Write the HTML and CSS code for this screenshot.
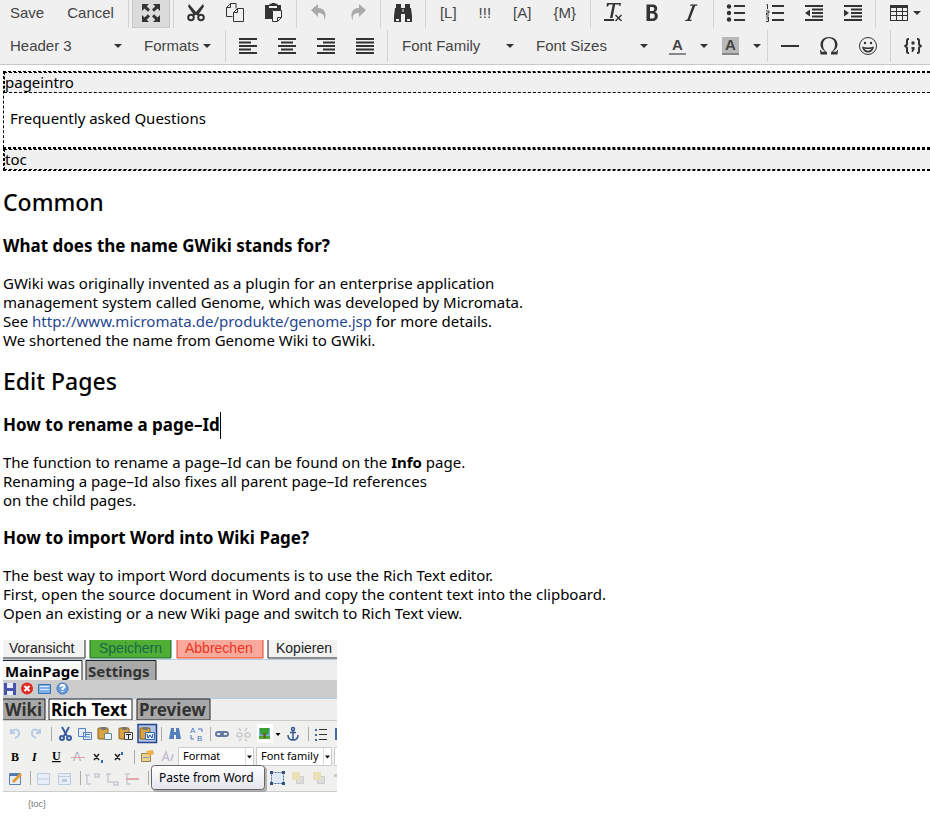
FILE: index.html
```html
<!DOCTYPE html>
<html lang="en">
<head>
<meta charset="utf-8">
<title>GWiki editor</title>
<link rel="stylesheet" href="styles.css">
</head>
<body>
<div class="toolbar" role="toolbar" aria-label="Editor">
  <div class="row row-top">
    <div class="group">
      <button class="btn text">Save</button>
      <button class="btn text">Cancel</button>
    </div>
    <div class="group">
      <button class="btn icon active" aria-label="Fullscreen"><svg viewBox="0 0 20 20"><path d="M1 1h7L5.700 3.300 9 6.500 7 8.800 3.500 5.500 1 8zM19 1v7l-2.500-2.500L13 8.800 11 6.500l3.300-3.200L12 1zM1 19v-7l2.500 2.500L7 11.200l2 2.300-3.300 3.200L8 19zM19 19h-7l2.300-2.300L11 13.500l2-2.300 3.500 3.300L19 12z"/></svg></button>
    </div>
    <div class="group">
      <button class="btn icon" aria-label="Cut"><svg viewBox="0 0 20 20"><path d="M3 1l7 8 7-8 1 2.500-5.500 8h-5L2 3.500z"/><g class="line"><circle cx="5" cy="14.500" r="2.800"/><circle cx="15" cy="14.500" r="2.800"/><path d="M7 12.500l3-2 3 2"/></g></svg></button>
      <button class="btn icon" aria-label="Copy"><svg viewBox="0 0 20 20"><g class="thin"><path d="M7.500 13.500h-6v-9l4-4h5.500v5M5.500.5v4h-4M8.500 18.500V9.500l4-4h6v13zM12.500 5.500v4h-4"/></g></svg></button>
      <button class="btn icon" aria-label="Paste"><svg viewBox="0 0 20 20"><path d="M1 2h4.500V.8h2L8 0h3l.5.8h2V2H17v5H8v9H1zM5 3v2h8V3z" fill-rule="evenodd"/><path class="thin" d="M8.500 7.500h9v7l-4 4h-5zM17.500 14.500h-4v4"/></svg></button>
    </div>
    <div class="group">
      <button class="btn icon" disabled aria-label="Undo"><svg viewBox="0 0 20 20"><path d="M2 7l7-6v4c7 0 9.500 6 6 13 1-6-1-8-6-8v4z"/></svg></button>
      <button class="btn icon" disabled aria-label="Redo"><svg viewBox="0 0 20 20"><path d="M18 7l-7-6v4C4 5 1.500 11 5 18c-1-6 1-8 6-8v4z"/></svg></button>
    </div>
    <div class="group">
      <button class="btn icon" aria-label="Find and replace"><svg viewBox="0 0 20 20"><path d="M3 1h5v4h4V1h5v4h1l1 8v6h-7v-8H8v8H1v-6l1-8h1zM3 16v2h3v-2zM14 16v2h3v-2zM9.500 6v3h1V6z" fill-rule="evenodd"/></svg></button>
    </div>
    <div class="group flush">
      <button class="btn text">[L]</button>
      <button class="btn text">!!!</button>
      <button class="btn text">[A]</button>
      <button class="btn text">{M}</button>
    </div>
    <div class="group">
      <button class="btn icon" aria-label="Clear formatting"><svg viewBox="0 0 20 20"><path d="M4 0h14l-.6 3h-1l-.2-1.500h-4L9.500 15H7L9.700 1.500H6L5 3.500H3.500zM1 16h10v2H1zM12 12.500l1-1 2.500 2.500 2.500-2.500 1 1-2.500 2.500 2.500 2.500-1 1-2.500-2.500-2.500 2.500-1-1 2.500-2.500z"/></svg></button>
      <button class="btn icon" aria-label="Bold"><svg viewBox="0 0 20 20"><path d="M4.500 1.500H11c5 0 5.500 6 2 7.500C17.500 10.500 16.500 18 11 18H4.500zM8 4v4h2.500c2.500 0 2.500-4 0-4zM8 10.500v5h2.500c3 0 3-5 0-5z" fill-rule="evenodd"/></svg></button>
      <button class="btn icon" aria-label="Italic"><svg viewBox="0 0 20 20"><path d="M9.500 1.500H16.500L16 2.800H14.200L8.800 16.700H10.800L10.300 18H4L4.500 16.700H6.300L11.500 2.800H9z"/></svg></button>
    </div>
    <div class="group">
      <button class="btn icon" aria-label="Bullet list"><svg viewBox="0 0 20 20"><circle cx="3" cy="3.500" r="2.200"/><circle cx="3" cy="10" r="2.200"/><circle cx="3" cy="16.500" r="2.200"/><path d="M8 2h11v2H8zM8 9h11v2H8zM8 16h11v2H8z"/></svg></button>
      <button class="btn icon" aria-label="Numbered list"><svg viewBox="0 0 20 20"><path d="M7 2h12v2H7zM7 9h12v2H7zM7 16h12v2H7z"/><path class="thin" d="M1.500 1.500h1V6M1 8h3v2H1.500v2H4M1 14h2.500v4.500H1M1.500 16h2"/></svg></button>
      <button class="btn icon" aria-label="Decrease indent"><svg viewBox="0 0 20 20"><path d="M1 2h18v2H1zM8 5.500h11v2H8zM8 9h11v2H8zM8 12.500h11v2H8zM1 16h18v2H1zM1 10l5-3.500v7z"/></svg></button>
      <button class="btn icon" aria-label="Increase indent"><svg viewBox="0 0 20 20"><path d="M1 2h18v2H1zM8 5.500h11v2H8zM8 9h11v2H8zM8 12.500h11v2H8zM1 16h18v2H1zM6 10L1 6.500v7z"/></svg></button>
    </div>
    <div class="group">
      <button class="btn menu" aria-label="Table"><svg class="glyph" viewBox="0 0 20 20"><path fill-rule="evenodd" d="M1 2h18v16H1zM2 5v3H7V5zM8 5v3h5V5zM14 5v3h4V5zM2 9v3H7V9zM8 9v3h5V9zM14 9v3h4V9zM2 13v4H7v-4zM8 13v4h5v-4zM14 13v4h4v-4z"/></svg><span class="caret"></span></button>
    </div>
  </div>
  <div class="row">
    <div class="group">
      <span class="pick"><select aria-label="Block format"><option>Header 3</option></select><span class="caret"></span></span>
      <button class="btn text menu">Formats<span class="caret"></span></button>
    </div>
    <div class="group">
      <button class="btn icon" aria-label="Align left"><svg viewBox="0 0 20 20"><path d="M1 2h18v2H1zM1 5.500h12v2H1zM1 9h18v2H1zM1 12.500h12v2H1zM1 16h18v2H1z"/></svg></button>
      <button class="btn icon" aria-label="Align center"><svg viewBox="0 0 20 20"><path d="M1 2h18v2H1zM4 5.500h12v2H4zM1 9h18v2H1zM4 12.500h12v2H4zM1 16h18v2H1z"/></svg></button>
      <button class="btn icon" aria-label="Align right"><svg viewBox="0 0 20 20"><path d="M1 2h18v2H1zM7 5.500h12v2H7zM1 9h18v2H1zM7 12.500h12v2H7zM1 16h18v2H1z"/></svg></button>
      <button class="btn icon" aria-label="Justify"><svg viewBox="0 0 20 20"><path d="M1 2h18v2H1zM1 5.500h18v2H1zM1 9h18v2H1zM1 12.500h18v2H1zM1 16h18v2H1z"/></svg></button>
    </div>
    <div class="group">
      <span class="pick"><select aria-label="Font family"><option>Font Family</option></select><span class="caret"></span></span>
      <span class="pick"><select aria-label="Font size"><option>Font Sizes</option></select><span class="caret"></span></span>
      <span class="split">
        <button class="btn color" aria-label="Text color"><span class="swatch">A</span></button>
        <button class="btn open" aria-label="Choose text color"><span class="caret"></span></button>
      </span>
      <span class="split">
        <button class="btn color" aria-label="Background color"><span class="swatch filled">A</span></button>
        <button class="btn open" aria-label="Choose background color"><span class="caret"></span></button>
      </span>
    </div>
    <div class="group">
      <button class="btn icon" aria-label="Horizontal line"><svg viewBox="0 0 20 20"><path d="M1 9h18v2H1z"/></svg></button>
      <button class="btn icon" aria-label="Special character"><svg viewBox="0 0 20 20"><path d="M1 14h1l.7 1.700h3.500C3 13.500 1.500 11.500 1.500 8.500 1.500 4 5 1 10 1s8.500 3 8.500 7.500c0 3-1.500 5-4.700 7.200h3.500L18 14h1l-.5 4.500H12v-2.300c2.800-2 4-4.200 4-7.500C16 4.500 13.500 2.200 10 2.200S4 4.500 4 8.700c0 3.300 1.200 5.500 4 7.500v2.300H1.500z"/></svg></button>
      <button class="btn icon" aria-label="Emoticons"><svg viewBox="0 0 20 20"><circle class="ring" cx="10" cy="10" r="8.500"/><circle cx="7" cy="7" r="1.200"/><circle cx="13" cy="7" r="1.200"/><path d="M4 10.500q6 2 12 0-1 6-6 6t-6-6zM6 12.500q4 4.500 8 0-4 1-8 0z" fill-rule="evenodd"/></svg></button>
    </div>
    <div class="group">
      <button class="btn icon" aria-label="Code sample"><svg viewBox="0 0 20 20"><path class="line" d="M6 3H5.500Q4 3 4 4.500V8Q4 9.500 1.500 10 4 10.500 4 12v3.500Q4 17 5.500 17H6M14 3h.5Q16 3 16 4.500V8q0 1.500 2.500 2-2.500.5-2.500 2v3.500q0 1.500-1.500 1.500H14"/><circle cx="10" cy="7" r="1.700"/><path d="M8.500 11h3v2.500L9.800 16H8.500l.8-2.500h-.8z"/></svg></button>
    </div>
  </div>
</div>

<main class="page">
  <section class="macro">
    <div class="macro-head">pageintro</div>
    <div class="macro-body"><p>Frequently asked Questions</p></div>
  </section>
  <section class="macro">
    <div class="macro-head">toc</div>
  </section>

  <h2>Common</h2>
  <h3>What does the name GWiki stands for?</h3>
  <p>GWiki was originally invented as a plugin for an enterprise application<br>
  management system called Genome, which was developed by Micromata.<br>
  See <a href="http://www.micromata.de/produkte/genome.jsp">http://www.micromata.de/produkte/genome.jsp</a> for more details.<br>
  We shortened the name from Genome Wiki to GWiki.</p>

  <h2>Edit Pages</h2>
  <h3>How to rename a page–Id<span class="cursor"></span></h3>
  <p>The function to rename a page–Id can be found on the <b>Info</b> page.<br>
  Renaming a page–Id also fixes all parent page–Id references<br>
  on the child pages.</p>

  <h3>How to import Word into Wiki Page?</h3>
  <p>The best way to import Word documents is to use the Rich Text editor.<br>
  First, open the source document in Word and copy the content text into the clipboard.<br>
  Open an existing or a new Wiki page and switch to Rich Text view.</p>

  <svg class="figure" viewBox="0 0 334 172" role="img" aria-label="Paste from Word in the Rich Text editor">
    <defs>
      <linearGradient id="tip" x2="0" y2="1"><stop stop-color="#fff"/><stop offset="1" stop-color="#e4e5f0"/></linearGradient>
      <g id="clip"><rect x="-6" y="-6" width="10" height="11" rx="1" fill="#d9a441" stroke="#876018"/><rect x="-3" y="-7" width="5" height="3" fill="#777"/></g>
    </defs>
    <rect width="334" height="152" fill="#eee"/>
    <path fill="#fff" d="M0 0h334v19H0z"/>
    <path fill="#f3f3f3" stroke="#222" d="M-1-1h83v19H-1zM265-1h80v19h-80z"/>
    <path fill="#4fae33" stroke="#176b35" d="M87-1h81v19H87z"/>
    <path fill="#f7a99b" stroke="#e8422c" d="M174-1h86v19h-86z"/>
    <g class="fig-ui">
      <text x="6" y="13" fill="#222">Voransicht</text><text x="96" y="13" fill="#16694a">Speichern</text>
      <text x="182" y="13" fill="#ec3322">Abbrechen</text><text x="273" y="13" fill="#222">Kopieren</text>
    </g>
    <path stroke="#b3cce0" d="M0 19.500h334"/>
    <path fill="#fafafa" stroke="#222" d="M-1 20.500h80V41H-1z"/><path fill="#a8a8a8" stroke="#222" d="M83 20.500h70V41H83z"/>
    <path fill="#ccc" d="M0 40h334v18H0z"/><path stroke="#b3cce0" d="M0 58.500h334"/>
    <g class="fig-tab"><text x="2" y="37">MainPage</text><text x="85" y="37" fill="#333">Settings</text></g>
    <path fill="#f0f0ee" d="M0 80h334v72H0z"/>
    <path fill="#a8a8a8" stroke="#222" d="M-1 59h43v21H-1zM134 59h73v21h-73z"/><path fill="#fff" stroke="#222" d="M46 59h83v21H46z"/>
    <g class="fig-tab large"><text x="2" y="76" fill="#333">Wiki</text><text x="48" y="76">Rich Text</text><text x="136" y="76" fill="#333">Preview</text></g>
    <path stroke="#ccc" d="M0 80.500h334M0 151.500h334"/>

    <path fill="#4854a9" d="M1 43h12v12H1z"/><path fill="#e8edff" d="M4 43h6v5H4zM4 51h6v4H4z"/>
    <circle cx="24" cy="48.500" r="6" fill="#dd2c26"/><path stroke="#fff" stroke-width="2" d="M21.500 46l5 5m0-5l-5 5"/>
    <path fill="#7eaeea" stroke="#3b72b8" d="M35.500 44.500h12v9h-12z"/><path stroke="#e1efff" d="M37 46.500h9M37 49.500h9"/>
    <circle cx="59.500" cy="48.500" r="5.500" fill="#6a9de0" stroke="#3b72b8"/><path fill="none" stroke="#fff" stroke-width="2" d="M57.500 47q0-2 2-2t2 2l-2 2v1m0 1v1"/>

    <path stroke="#aaa" d="M48.500 87v14M158.500 87v14M207.500 87v14M305.500 87v14M131.500 110v14M27.500 131v14M77.500 131v14M145.500 131v14"/>
    <g fill="none" stroke="#b8cbe6" stroke-width="2"><path d="M8 89v4h4M8 92q6-5 8 0 1 4-4 6M37 89v4h-4M37 92q-6-5-8 0-1 4 4 6"/></g>
    <g fill="none" stroke="#385ea0" stroke-width="2"><path d="M59 87l5 9M66 87l-5 9"/><circle cx="59" cy="98" r="2"/><circle cx="66" cy="98" r="2"/></g>
    <path fill="#e5efff" stroke="#5582c4" d="M75.500 88.500h7v8h-7zM80.500 92.500h8v7h-8z"/><path stroke="#5582c4" d="M82 94.500h5M82 97h5"/>
    <use href="#clip" x="101" y="94"/><path fill="#e9f1ff" stroke="#668888" d="M101.500 93.500h7v6h-7z"/>
    <use href="#clip" x="122" y="94"/><path fill="#eee" stroke="#444" d="M121.500 92.500h8v7h-8z"/><path stroke="#222" d="M123 94.500h5M125.500 94v5"/>
    <path fill="#b2c3e6" stroke="#24468c" stroke-width="1.500" d="M135 84.500h18.500v18H135z"/>
    <use href="#clip" x="143" y="94"/><path fill="#e4efff" stroke="#356ab5" d="M142.500 92.500h9v7h-9z"/><path fill="none" stroke="#2551a2" d="M144 94l1 4 2-3 2 3 1-4"/>
    <path fill="#557ebd" d="M168 88h3v4h2v-4h3l2 11h-5v-4h-2v4h-5z"/>
    <g class="fig-small" fill="#4776c7"><text x="187" y="93">A</text><text x="194" y="101">B</text><path fill="none" stroke="#4776c7" d="M195 89h4v3M188 95v4h3"/></g>
    <g fill="none" stroke="#6579a0" stroke-width="2"><rect x="213" y="92" width="7" height="4" rx="2"/><rect x="218" y="92" width="7" height="4" rx="2"/></g>
    <g fill="none" stroke="#c9c9ce" stroke-width="1.500"><rect x="234" y="93" width="5" height="4" rx="2"/><rect x="242" y="93" width="5" height="4" rx="2"/><path d="M236 88l2 3M244 88l-2 3M236 101l2-2M244 101l-2-2"/></g>
    <path fill="#fff" d="M254 84h16v19h-16z"/><path fill="#77aee5" d="M256 88h11v11h-11z"/><path fill="#3aa02c" d="M257 88h9v5l-2 2h-5l-2-2z"/><path fill="#4da832" d="M256 96h11v3h-11z"/><path stroke="#70501e" stroke-width="2" d="M261.500 93v5"/>
    <path d="M272.500 93h5l-2.500 3z"/><g fill="none" stroke="#335a93" stroke-width="1.500"><circle cx="290" cy="89" r="1.500"/><path d="M290 91v9M287 92.500h6M285 95q0 5 5 5t5-5"/></g>
    <path stroke="#333" d="M316 89.500h8M316 94.500h8M316 99.500h8"/><path fill="#4068aa" d="M312 89h2v2h-2zM312 94h2v2h-2zM312 99h2v2h-2zM332 88h2v12h-2z"/>

    <g class="fig-serif"><text x="8" y="121">B</text><text x="29" y="121" font-style="italic">I</text><text x="49" y="120" text-decoration="underline">U</text></g>
    <text class="fig-small big" x="70" y="121" fill="#aaaabb">A</text><path stroke="#e1a3a3" d="M68 117.500h14"/>
    <path fill="none" stroke="#222" stroke-width="1.500" d="M91 114l5 6m0-6l-5 6M112 114l5 6m0-6l-5 6"/><path stroke="#3668ba" stroke-width="2" d="M99 120v3M119 112v3"/>
    <path fill="#e9d28b" stroke="#96824b" d="M138.500 113.500h9v8h-9z"/><path stroke="#8897b3" d="M140 117.500h6"/><path fill="#edb34a" d="M143 111l7-1 1 4-5 2z"/>
    <path fill="none" stroke="#c5bbd4" stroke-width="1.500" d="M159 121l4-9 3 9m-6-3h5m3 3l2-7"/>
    <path fill="#fff" stroke="#ccc" d="M175.500 107.500h75v18h-75zM253.500 107.500h75v18h-75zM331.500 107.500h10v18h-10z"/><path stroke="#ddd" d="M242.500 108v17M320.500 108v17"/><path d="M244 115.500h5l-2.500 3zM322 115.500h5l-2.500 3z"/>
    <g class="fig-label"><text x="180" y="120">Format</text><text x="258" y="120">Font family</text></g>

    <path fill="#e5eefb" stroke="#5d83b5" d="M6.500 133.500h11v11h-11z"/><path stroke="#4c79b5" stroke-width="2" d="M7 135h10"/><path stroke="#e49d32" stroke-width="3" d="M10 142l8-8"/>
    <path fill="#e8eef8" stroke="#bdcbe0" d="M34.500 133.500h12v11h-12zM55.500 133.500h12v11h-12z"/><path stroke="#bdcbe0" d="M35 139h11M56 136.500h11"/><path fill="#bdcbe0" d="M59 139h5v3h-5z"/>
    <g fill="none" stroke="#c6cbd5" stroke-width="1.500"><path d="M82 135h5M84 135v9h4M92 134h4v3h-4zM103 134h5M105 134v8h5M111 142h4v3h-4zM122 134h5M124 134v10h4"/></g><path stroke="#e1aaaa" stroke-width="2" d="M123 139h13"/>
    <path fill="#dfe9f8" stroke="#4e6e9e" stroke-dasharray="2 1" d="M268.500 132.500h12v11h-12z"/><path fill="#34517d" d="M267 131h3v3h-3zM279 131h3v3h-3zM267 142h3v3h-3zM279 142h3v3h-3z"/>
    <path fill="#ddd" stroke="#ccc" d="M293.500 136.500h7v7h-7zM314.500 136.500h7v7h-7z"/><path fill="#eadfb8" d="M289 132h8v8h-8zM310 132h8v8h-8z"/><path fill="#c9c9c9" d="M331 134h3v3h-3z"/>
    <rect x="150" y="127" width="114" height="25" rx="3" fill="#888" opacity=".6"/><rect x="148.500" y="125.500" width="113" height="24" rx="3" fill="url(#tip)" stroke="#666"/>
    <text class="fig-tip" x="156" y="142">Paste from Word</text>
    <text class="fig-note" x="25" y="167">{toc}</text>
  </svg>
</main>
</body>
</html>
```
FILE: styles.css
```css
body {
  margin: 0;
  background: #fff;
  color: #000;
  font: 15px/19px "Noto Sans", sans-serif;
  overflow-x: hidden;
}

/* Toolbar */
.toolbar {
  background: #f0f0f0;
  border-bottom: 1px solid #c8c8c8;
  padding-bottom: 2px;
  overflow: hidden;
}
.row {
  display: flex;
  height: 32px;
  margin-left: -1px;
}
.row-top {
  height: 28px;
  margin-bottom: 2px;
}
.group {
  display: flex;
  flex: none;
  gap: 1px;
  padding-right: 3px;
}
.flush { gap: 0; }
.group + .group {
  border-left: 1px solid #d4d4d4;
  padding-left: 3px;
}
.btn, .pick select {
  box-sizing: border-box;
  margin: 0;
  border: 1px solid transparent;
  background: transparent;
  color: #444;
  font: 15px/20px "Liberation Sans", sans-serif;
}
.btn {
  display: flex;
  align-items: center;
  justify-content: center;
  padding: 0;
}
.row-top .btn {
  border-top: 0;
  padding-bottom: 2px;
}
.row-top .active { border-bottom-color: #c8c8c8; }
.btn.text { padding-left: 10px; padding-right: 10px; }
.icon { width: 38px; }
.active {
  background: #dbdbdb;
  border-color: #c8c8c8;
}
.btn svg {
  width: 20px;
  height: 20px;
  fill: #333;
}
.btn:disabled svg { fill: #aaa; }
.btn .line, .btn .thin, .btn .ring {
  fill: none;
  stroke: #333;
  stroke-width: 2;
}
.btn .thin, .btn .ring { stroke-width: 1; }
.menu { gap: 4px; }
.menu .glyph { margin-left: 9px; }
.caret {
  width: 0;
  border: 4px solid transparent;
  border-top-color: #333;
  border-bottom: 0;
}
.pick {
  display: flex;
  align-items: center;
  width: 133px;
}
.pick select {
  appearance: none;
  width: 100%;
  height: 100%;
  padding: 0 24px 0 10px;
}
.pick .caret {
  flex: none;
  margin-left: -18px;
  margin-right: 10px;
  pointer-events: none;
}
.split { display: flex; }
.color { width: 37px; }
.open { width: 15px; }
.swatch {
  width: 17px;
  border-bottom: 2px solid #888;
  font-weight: bold;
  line-height: 16px;
}
.filled { background: #b8b8b8; }

/* Document */
.page {
  padding: 6px 0 0 3px;
}
.macro {
  border: 1px dashed #000;
  border-right: 0;
}
.macro-head {
  border: 1px dashed #000;
  border-right: 0;
  background: #f0f0f0;
}
.macro-body {
  padding: 16px 6px 19px;
}
.macro-body p { margin: 0; }
h2 {
  margin: 17px 0 18px;
  font-size: 23px;
  line-height: 29px;
  font-weight: 500;
}
h3 {
  display: flex;
  align-items: center;
  margin: 17px 0;
  font-size: 17px;
  line-height: 22px;
}
p { margin: 0; }
a {
  color: #1f4690;
  text-decoration: none;
}
.cursor {
  width: 1px;
  height: 27px;
  margin: -3px 0;
  background: #000;
}

/* Embedded illustration */
.figure {
  display: block;
  width: 334px;
  margin-top: 17px;
}
.fig-ui { font: 14px "Liberation Sans", sans-serif; }
.fig-tab { font: bold 15px "Noto Sans", sans-serif; }
.large { font-size: 17px; }
.fig-small { font: 8px "Liberation Sans", sans-serif; }
.big { font-size: 12px; }
.fig-serif { font: bold 12px "Liberation Serif", serif; }
.fig-label { font: 11px "Noto Sans", sans-serif; }
.fig-tip { font: 12px "Noto Sans", sans-serif; }
.fig-note {
  font: 9px "Liberation Sans", sans-serif;
  fill: #777;
}
```
